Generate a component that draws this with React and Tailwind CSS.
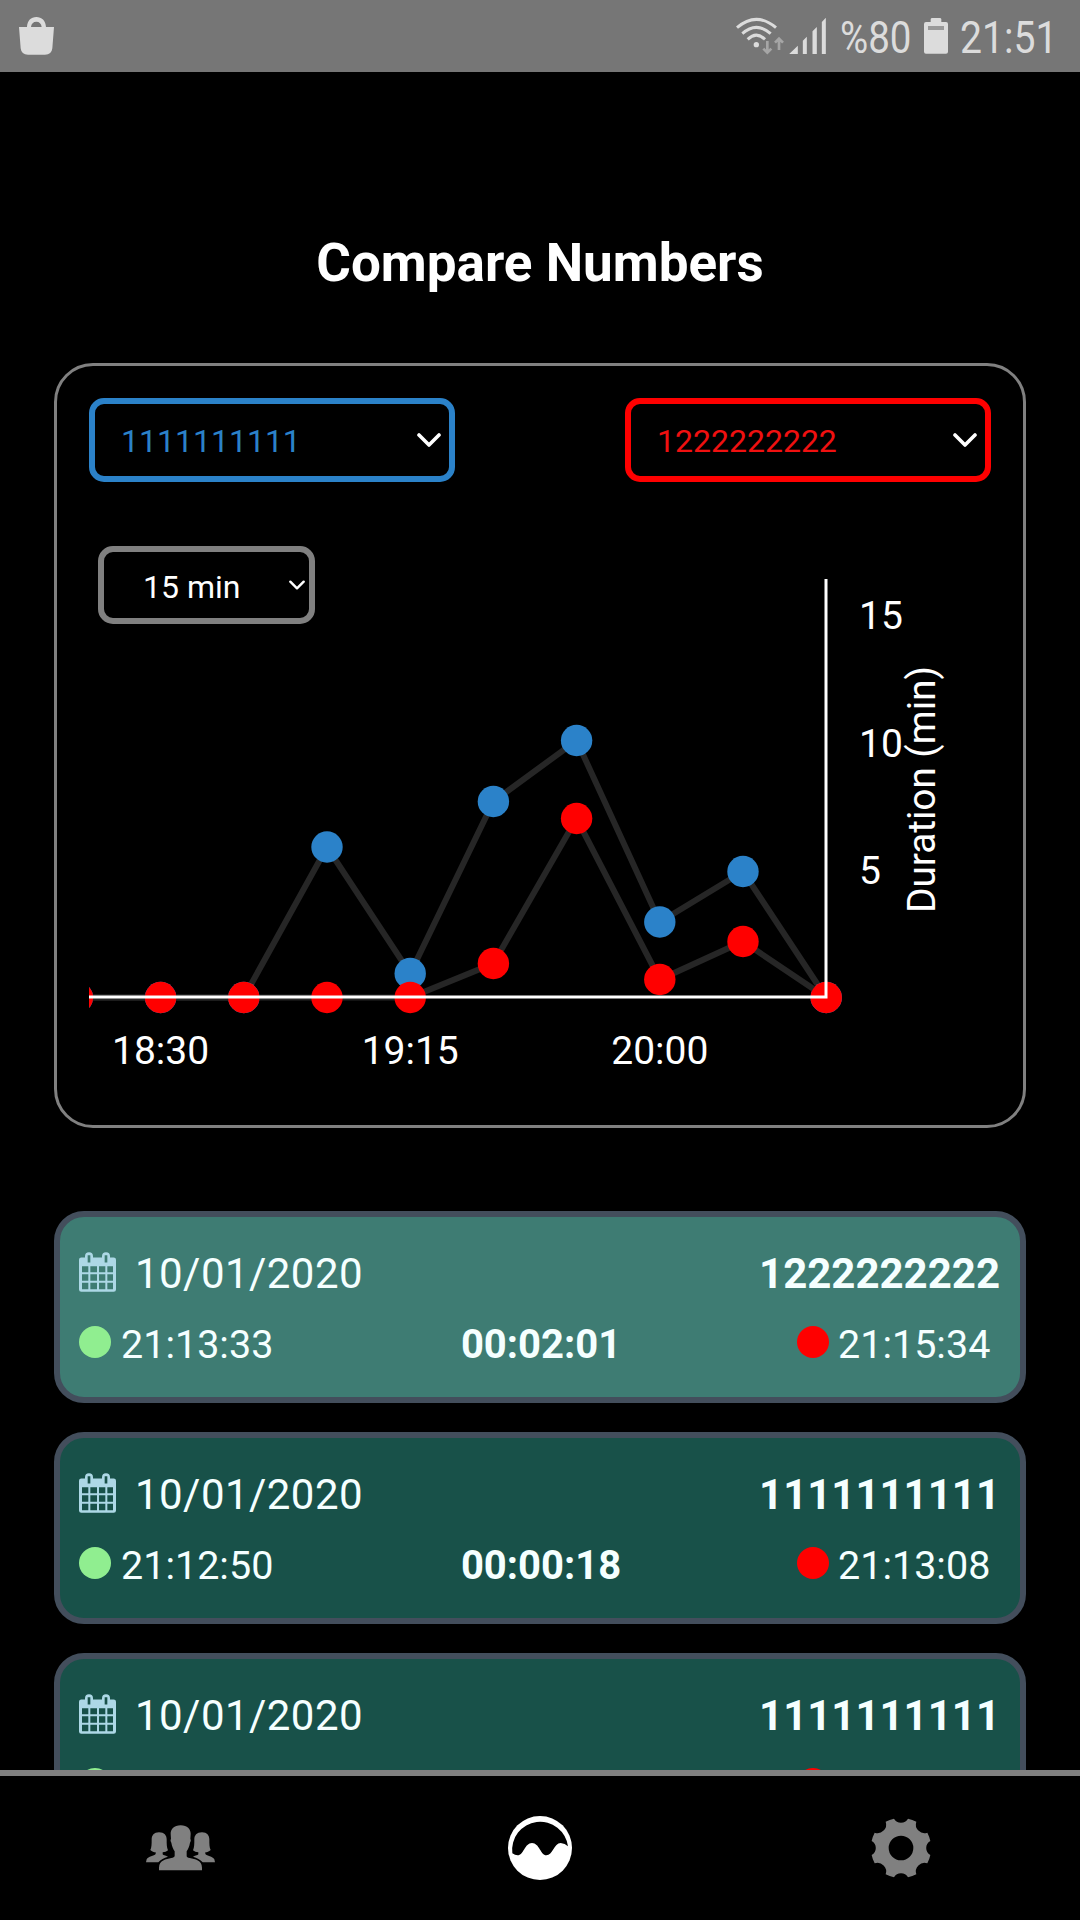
const BLUE = '#2b82c9';
const RED = '#ff0000';

const STEP = 83.2;
const ZERO_Y = 451;

// y positions inside the chart, oldest interval first
const blueSeries = [451.5, 451.5, 451.5, 301, 427.5, 255.5, 194.5, 376, 325.5, 451.5];
const redSeries = [451.5, 451.5, 451.5, 451.5, 451.5, 417.5, 272.5, 433.5, 395.5, 451.5];

const xLabels = [
  { text: '18:30', index: 1 },
  { text: '19:15', index: 4 },
  { text: '20:00', index: 7 }
];

const yLabels = [
  { text: '15', y: 83 },
  { text: '10', y: 210.5 },
  { text: '5', y: 338 }
];

const calls = [
  { date: '10/01/2020', number: '1222222222', start: '21:13:33', duration: '00:02:01', end: '21:15:34', highlighted: true },
  { date: '10/01/2020', number: '1111111111', start: '21:12:50', duration: '00:00:18', end: '21:13:08', highlighted: false },
  { date: '10/01/2020', number: '1111111111', highlighted: false }
];

const pointX = (i) => -11.6 + i * STEP;

function StatusBar() {
  return (
    <header className="flex h-[72px] shrink-0 items-center justify-between bg-[#767676] pl-[19px] pr-[23px] text-[#dcdcdc]">
      <svg className="h-[38px] w-[35px]" viewBox="57 51 105 114" fill="currentColor">
        <path d="M57 81H81C82 62 93 51 109 51S137 62 138 81H162L157 145Q155 164 135 164H84Q64 164 62 145ZM93 81H125C124 71 118 65 109 65S94 71 93 81Z" fillRule="evenodd" />
      </svg>
      <div className="flex items-center">
        <svg className="mr-[5px] h-[38px] w-[48px]" viewBox="48 48 144 114" fill="none" stroke="currentColor" strokeWidth="9">
          <path d="M51 80Q109 30 168 80M67 98Q109 60 152 98M83 115Q109 90 135 115" />
          <circle cx="109" cy="131" r="8" fill="currentColor" stroke="none" />
          <path d="M142 120V154M130 143L142 155L154 143M177 147V114M165 125L177 113L189 125" stroke="#a6a6a6" strokeWidth="8" />
        </svg>
        <svg className="mr-[14px] h-[38px] w-[37px]" viewBox="208 48 110 114" fill="currentColor">
          <path d="M208 159L234 134V159ZM249 159V119L261 107V159ZM278 159V91L291 78V159ZM306 159V63L318 50V159Z" />
        </svg>
        <span className="w-[84px] origin-left scale-x-[.855] whitespace-nowrap text-[45px] leading-[72px]">
          <span className="relative top-[2px]">%80</span>
        </span>
        <svg className="mr-[12px] h-[36px] w-[24px]" viewBox="612 54 72 108" fill="currentColor">
          <path d="M632 66V58Q632 54 637 54H659Q664 54 664 58V66H678Q684 66 684 72V155Q684 161 678 161H618Q612 161 612 155V72Q612 66 618 66Z" />
          <path d="M624 78H672V90H624Z" fill="#999" />
        </svg>
        <span className="w-[97px] origin-left scale-x-[.87] whitespace-nowrap text-[45px] leading-[72px]">
          <span className="relative top-[2px]">21:51</span>
        </span>
      </div>
    </header>
  );
}

function Chevron({ className }) {
  return (
    <svg className={className} viewBox="0 0 24 14" fill="none" stroke="#fff" strokeWidth="3.6" strokeLinecap="round" strokeLinejoin="round">
      <path d="M2 2L12 12L22 2" />
    </svg>
  );
}

function Series({ values, color }) {
  return (
    <g>
      <polyline
        points={values.map((y, i) => `${pointX(i)},${y}`).join(' ')}
        fill="none"
        stroke="#262626"
        strokeWidth="6"
      />
      {values.map((y, i) => (<circle key={i} cx={pointX(i)} cy={y} r="15.7" fill={color} />))}
    </g>
  );
}

function DurationChart() {
  return (
    <svg className="block h-[546px] w-[902px] overflow-hidden" viewBox="0 0 902 546" fontSize="39" fill="#fff">
      <Series values={blueSeries} color={BLUE} />
      <Series values={redSeries} color={RED} />
      <path d={`M0 ${ZERO_Y}H737V33`} fill="none" stroke="#fff" strokeWidth="3" />
      {xLabels.map((label) => (
        <text key={label.text} x={pointX(label.index)} y="518" textAnchor="middle">{label.text}</text>
      ))}
      {yLabels.map((label) => (
        <text key={label.text} x="770" y={label.y}>{label.text}</text>
      ))}
      <text transform="translate(845.5 367) rotate(-90)" textLength="247">Duration (min)</text>
    </svg>
  );
}

function ComparePanel() {
  return (
    <section className="mx-[54px] h-[765px] rounded-[39px] border-[3px] border-[#808080] px-8 pt-8">
      <div className="flex justify-between">
        <button className="flex h-[84px] w-[366px] items-center justify-between rounded-[15px] border-[6px] border-[#2b82c9] pl-[26px] pr-[8px] text-[32px] text-[#2b82c9]">
          <span className="pt-[2px]">1111111111</span>
          <Chevron className="h-[14px] w-[24px]" />
        </button>
        <button className="flex h-[84px] w-[366px] items-center justify-between rounded-[15px] border-[6px] border-[#ff0000] pl-[26px] pr-[8px] text-[32px] text-[#f01010]">
          <span className="pt-[2px]">1222222222</span>
          <Chevron className="h-[14px] w-[24px]" />
        </button>
      </div>
      <div className="relative mt-16">
        <DurationChart />
        <button className="absolute left-[9px] top-0 flex h-[78px] w-[217px] items-center justify-between rounded-[15px] border-[6px] border-[#808080] pl-[39px] pr-[4px] text-[32px] text-white">
          <span className="pt-[3px]">15 min</span>
          <Chevron className="h-[10px] w-[16px]" />
        </button>
      </div>
    </section>
  );
}

function CalendarIcon() {
  return (
    <svg className="mb-[2px] h-[40px] w-[37px]" viewBox="117 186 111 119" fill="#add8e6">
      <path
        fillRule="evenodd"
        d="M117 209Q117 202 124 202H135V198A12 12 0 0 1 159 198V202H186V198A12 12 0 0 1 210 198V202H221Q228 202 228 209V298Q228 305 221 305H124Q117 305 117 298Z
        M143 195V217H151V195ZM194 195V217H202V195Z
        M126 228V246H145V228ZM151 228V246H171V228ZM177 228V246H196V228ZM202 228V246H219V228Z
        M126 252V272H145V252ZM151 252V272H171V252ZM177 252V272H196V252ZM202 252V272H219V252Z
        M126 278V297H145V278ZM151 278V297H171V278ZM177 278V297H196V278ZM202 278V297H219V278Z"
      />
    </svg>
  );
}

function CallCard({ call }) {
  return (
    <li className={`h-[192px] shrink-0 rounded-[30px] border-[6px] border-[#434e5c] pl-[19px] pr-[20px] pt-[26px] text-[#f5ffff] ${call.highlighted ? 'bg-[#3e7c73]' : 'bg-[#185149]'}`}>
      <div className="flex h-[60px] items-center justify-between text-[42px]">
        <div className="flex items-center gap-[19px]">
          <CalendarIcon />
          <span className="tracking-[0.45px]">{call.date}</span>
        </div>
        <span className="font-bold">{call.number}</span>
      </div>
      <div className="mt-[12px] grid h-[60px] grid-cols-[1fr_auto_1fr] items-center text-[39.5px]">
        <div className="flex items-center gap-[10px]">
          <span className="mb-[7px] size-8 rounded-full bg-[#90ee90]" />
          <span>{call.start}</span>
        </div>
        <span className="pl-[3px] text-[40px] font-bold">{call.duration}</span>
        <div className="flex items-center justify-end gap-[9px] pr-[10px]">
          <span className="mb-[7px] size-8 rounded-full bg-[#ff0000]" />
          <span className="w-[152px]">{call.end}</span>
        </div>
      </div>
    </li>
  );
}

function PeopleIcon() {
  const woman = 'M357 579C342 579 335 589 335 600C335 615 335 625 331 632C336 637 342 639 347 639V644C342 651 325 650 320 660L318 669H355C362 660 372 656 384 652C376 648 368 648 368 645V639C374 638 380 637 384 633C380 625 380 615 380 600C380 589 373 579 357 579Z';
  return (
    <svg className="h-[46px] w-[69px]" viewBox="318 557 207 138" fill="#808080">
      <path d={woman} />
      <path d={woman} transform="translate(843 0) scale(-1 1)" />
      <path d="M422 558C402 558 392 570 392 583L393 600C391 600 391 606 394 610C396 622 400 630 404 636V650C403 654 400 655 394 656C378 660 358 662 357 685V693H486V685C485 662 466 660 449 656C443 655 440 654 440 650V636C444 630 448 622 450 610C453 606 453 600 451 600L452 583C452 570 442 558 422 558Z" />
    </svg>
  );
}

function WaveIcon() {
  return (
    <svg className="size-16" viewBox="144 228 192 192">
      <circle cx="240" cy="324" r="96" fill="#fff" />
      <path d="M157 340Q165 346 173 346C191 346 194 309 216 309C238 309 242 346 259 346C278 346 282 309 302 309Q315 310 324 319A84 84 0 1 0 157 340Z" fill="#000" />
    </svg>
  );
}

function GearIcon() {
  return (
    <svg className="ml-[2px] size-16" viewBox="-96 -96 192 192" fill="#808080">
      <path
        fillRule="evenodd"
        d="M-21 -88A24 24 0 0 0 21 -88A91 91 0 0 1 46 -79A26 26 0 0 0 79 -46A91 91 0 0 1 88 -21A24 24 0 0 0 88 21A91 91 0 0 1 79 46A26 26 0 0 0 46 79A91 91 0 0 1 21 88A24 24 0 0 0 -21 88A91 91 0 0 1 -46 79A26 26 0 0 0 -79 46A91 91 0 0 1 -88 21A24 24 0 0 0 -88 -21A91 91 0 0 1 -79 -46A26 26 0 0 0 -46 -79A91 91 0 0 1 -21 -88Z
        M-37 0A37 37 0 1 0 37 0A37 37 0 1 0 -37 0Z"
      />
    </svg>
  );
}

export default function App() {
  return (
    <div className="flex h-[1920px] w-[1080px] flex-col overflow-hidden bg-black font-['Roboto',sans-serif] text-white">
      <StatusBar />

      <main className="flex min-h-0 flex-1 flex-col overflow-hidden pt-[155px]">
        <h1 className="mb-[64px] text-center text-[53px] font-bold leading-[72px]">Compare Numbers</h1>
        <div className="shrink-0">
          <ComparePanel />
        </div>
        <ul className="mx-[54px] mt-[83px] flex flex-col gap-[29px]">
          {calls.map((call, i) => (<CallCard key={i} call={call} />))}
        </ul>
      </main>

      <nav className="grid h-[150px] shrink-0 grid-cols-3 items-center justify-items-center border-t-[6px] border-[#808080] bg-black">
        <PeopleIcon />
        <WaveIcon />
        <GearIcon />
      </nav>
    </div>
  );
}
